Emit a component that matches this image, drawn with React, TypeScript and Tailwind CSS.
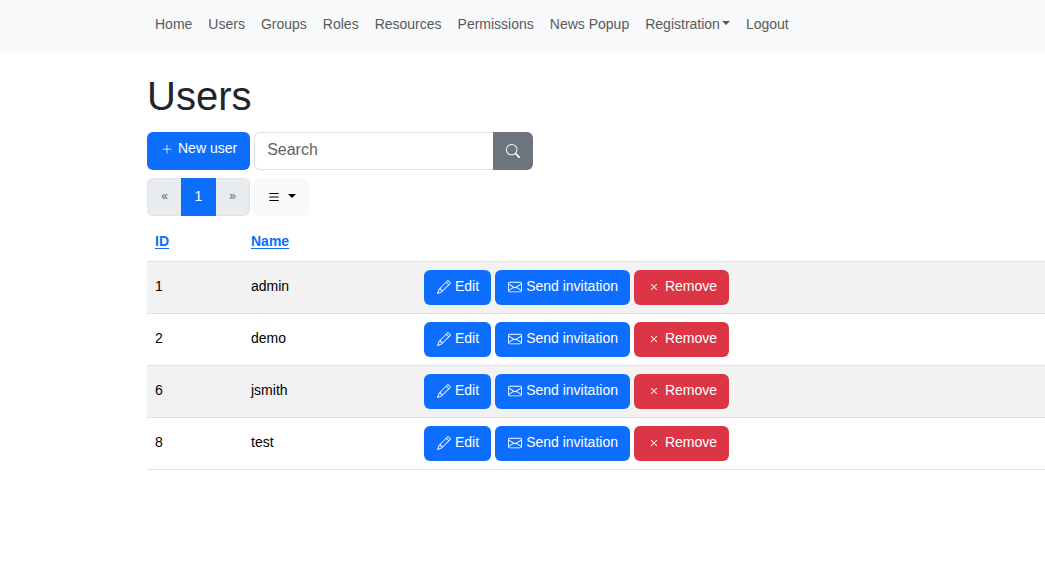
import type { ReactNode } from "react"
import { BsEnvelope, BsList, BsPencil, BsPlusLg, BsSearch, BsX } from "react-icons/bs"

const navItems = ["Home", "Users", "Groups", "Roles", "Resources", "Permissions", "News Popup", "Registration", "Logout"]

const users = [
	{ id: 1, name: "admin" },
	{ id: 2, name: "demo" },
	{ id: 6, name: "jsmith" },
	{ id: 8, name: "test" },
]

function Caret() {
	return (
		<span
			className="mb-[2px] inline-block border-x-4 border-t-4 border-x-transparent border-t-current"
			aria-hidden="true"
		/>
	)
}

function NavBar() {
	return (
		<nav className="bg-[#f8f9fa] pt-2 pb-3 pl-[147px]">
			<ul className="flex">
				{navItems.map((item) => (
					<li key={item}>
						<a
							href="#"
							className="flex items-center gap-0.5 px-2 py-1 text-sm leading-6 whitespace-nowrap text-[#595a5b] hover:text-black"
						>
							{item}
							{item === "Registration" && <Caret />}
						</a>
					</li>
				))}
			</ul>
		</nav>
	)
}

interface ActionButtonProps {
	icon: ReactNode
	label: string
	danger?: boolean
}

function ActionButton({ icon, label, danger }: ActionButtonProps) {
	return (
		<button
			type="button"
			className={`flex h-[35px] items-center gap-1 rounded-md pr-3 pb-[2px] pl-[13px] whitespace-nowrap text-white ${danger ? "bg-[#dc3545]" : "bg-[#0d6efd]"}`}
		>
			<span className="pt-[2px]">{icon}</span>
			{label}
		</button>
	)
}

function Toolbar() {
	return (
		<div className="flex gap-1">
			<button
				type="button"
				className="flex h-[38px] items-center gap-1 rounded-md bg-[#0d6efd] px-[13px] pb-[6px] text-sm whitespace-nowrap text-white"
			>
				<span className="flex w-[14px] justify-center pt-[2px]">
					<BsPlusLg className="size-3" />
				</span>
				New user
			</button>
			<form className="flex" onSubmit={(e) => e.preventDefault()}>
				<input
					type="text"
					aria-label="Search"
					placeholder="Search"
					className="h-[38px] w-[239px] rounded-l-md border border-r-0 border-[#dee2e6] px-3 pb-[2px] text-base text-[#212529] outline-none placeholder:text-[#5f6367]"
				/>
				<button
					type="submit"
					aria-label="Run search"
					className="flex h-[38px] w-10 items-center justify-center rounded-r-md bg-[#6c757d] text-white"
				>
					<BsSearch className="size-[14px]" />
				</button>
			</form>
		</div>
	)
}

function Pager() {
	return (
		<div className="mt-2 flex gap-1">
			<ul className="flex h-[38px] text-sm">
				<li>
					<button
						type="button"
						disabled
						aria-label="Previous"
						className="h-full w-[34px] rounded-l-md border border-r-0 border-[#dee2e6] bg-[#e9ecef] pb-[2px] text-xs text-[#5f6367]"
					>
						«
					</button>
				</li>
				<li>
					<button type="button" className="h-full w-[35px] bg-[#0d6efd] pb-[2px] text-white">
						1
					</button>
				</li>
				<li>
					<button
						type="button"
						disabled
						aria-label="Next"
						className="h-full w-[34px] rounded-r-md border border-l-0 border-[#dee2e6] bg-[#e9ecef] pb-[2px] text-xs text-[#5f6367]"
					>
						»
					</button>
				</li>
			</ul>
			<button
				type="button"
				aria-label="Page size"
				className="flex h-[38px] items-center gap-[7px] rounded-md bg-[#f8f9fa] px-[13px] text-black"
			>
				<BsList className="size-[14px]" />
				<Caret />
			</button>
		</div>
	)
}

function UsersTable() {
	return (
		<table className="mt-2 w-full table-fixed border-collapse text-sm text-black">
			<thead>
				<tr className="h-[37px] border-b border-[#dee2e6] text-left text-[#0d6efd]">
					<th className="w-24 px-2 pb-[2px]">
						<a href="#" className="underline underline-offset-2">
							ID
						</a>
					</th>
					<th className="w-[173px] px-2 pb-[2px]">
						<a href="#" className="underline underline-offset-2">
							Name
						</a>
					</th>
					<th aria-label="Actions" />
				</tr>
			</thead>
			<tbody>
				{users.map((user) => (
					<tr key={user.id} className="h-[52px] border-b border-[#dee2e6] odd:bg-[#f2f2f2]">
						<td className="px-2 pb-[2px]">{user.id}</td>
						<td className="px-2 pb-[2px]">{user.name}</td>
						<td className="px-2">
							<div className="flex gap-1">
								<ActionButton icon={<BsPencil className="size-[14px]" />} label="Edit" />
								<ActionButton icon={<BsEnvelope className="size-[14px]" />} label="Send invitation" />
								<ActionButton icon={<BsX className="size-[14px]" />} label="Remove" danger />
							</div>
						</td>
					</tr>
				))}
			</tbody>
		</table>
	)
}

export default function App() {
	return (
		<div className="min-h-screen bg-white font-['Liberation_Sans',Arial,sans-serif] text-[#212529]">
			<NavBar />
			<main className="pt-5 pl-[147px]">
				<h1 className="mb-3 text-[40px] leading-[48px]">Users</h1>
				<Toolbar />
				<Pager />
				<UsersTable />
			</main>
		</div>
	)
}
